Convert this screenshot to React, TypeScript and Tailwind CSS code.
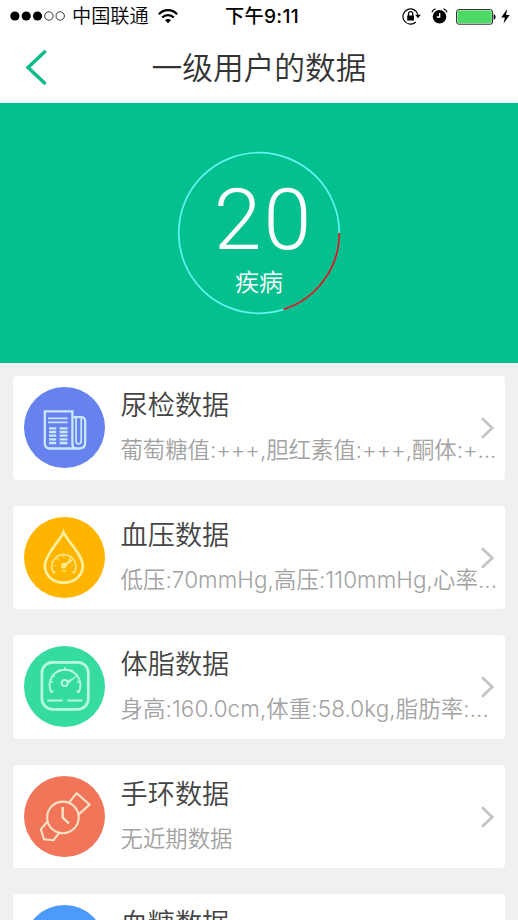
import React from 'react';

const RING_RADIUS = 80.3;
const RING_LENGTH = 2 * Math.PI * RING_RADIUS;

const SignalDots = () => (
  <svg width="56" height="10" viewBox="0 0 56 10" className="shrink-0">
    {[4.9, 16.2, 27.5].map((cx) => (
      <circle key={cx} cx={cx} cy="5" r="4.6" fill="#000" />
    ))}
    {[38.9, 50.2].map((cx) => (
      <circle key={cx} cx={cx} cy="5" r="4.2" fill="none" stroke="#000" strokeWidth="0.8" />
    ))}
  </svg>
);

const WifiIcon = () => (
  <svg width="20" height="15" viewBox="0 0 20 15" fill="none" stroke="#000" strokeWidth="2.3">
    <path d="M0.9 5.2C6 -0.2 14 -0.2 19.1 5.2" />
    <path d="M4.2 8.5C7.4 5.2 12.6 5.2 15.8 8.5" />
    <path d="M10 14.2L6.9 11.1C8.5 9.5 11.5 9.5 13.1 11.1Z" fill="#000" stroke="none" />
  </svg>
);

const LockIcon = () => (
  <svg width="19" height="17" viewBox="0 0 19 17" fill="none" stroke="#000">
    <path d="M15.9 6.6A7.6 7.6 0 1 0 13.8 14" strokeWidth="1.2" />
    <path d="M13.2 6.8H18.8L16 10.3Z" fill="#000" stroke="none" />
    <rect x="5.2" y="7.5" width="6.8" height="5" rx="0.5" fill="#000" stroke="none" />
    <path d="M6.5 8V5.8A2.1 2.1 0 0 1 10.7 5.8V8" strokeWidth="1.3" />
  </svg>
);

const AlarmIcon = () => (
  <svg width="17" height="17" viewBox="0 0 17 17" fill="none">
    <circle cx="8.5" cy="8.8" r="6.8" fill="#000" />
    <path d="M8.7 5V9H5.8" stroke="#fff" strokeWidth="1.3" />
    <path d="M0.9 4.2C1.4 2.6 2.8 1.3 4.5 0.8M16.1 4.2C15.6 2.6 14.2 1.3 12.5 0.8" stroke="#000" strokeWidth="1.2" />
  </svg>
);

const BatteryIcon = () => (
  <svg width="40" height="16" viewBox="0 0 40 16">
    <rect x="0.6" y="0.6" width="36" height="14.6" rx="2.2" fill="#fff" stroke="#222" strokeWidth="1" />
    <rect x="1.5" y="1.5" width="34.2" height="12.8" rx="1" fill="#4cd964" />
    <path d="M37.7 5.2C40.2 5.6 40.2 10.2 37.7 10.6Z" fill="#000" />
  </svg>
);

const BoltIcon = () => (
  <svg width="9" height="15" viewBox="0 0 9 15">
    <path d="M6.2 0L0.2 8.4H3.9L2.6 14.6L8.7 6H5Z" fill="#000" />
  </svg>
);

const UrineIcon = () => (
  <g fill="none" stroke="#c9e8fb" strokeWidth="2.3">
    <path d="M20.8 24.4H48.4V57C48.4 60 50.4 61.5 53 61.5H26C22.5 61.5 20.8 59.6 20.8 56.5Z" />
    <path d="M48.4 30.2H57C59.8 30.2 61.2 31.8 61.2 34.4V55.5C61.2 59.5 59 61.5 55 61.5H52" />
    <path d="M52 31V53.5C52 58 57.2 58 57.2 53.5V31" strokeWidth="1.7" />
    <path d="M24 31.3H43.5M24 35.3H43.5" strokeWidth="1.8" />
    <path d="M25 41.3H32.2M25 45H32.2M25 48.7H32.2M25 52.4H32.2M25 56H32.2M35.6 41.3H43.5M35.6 45H43.5M35.6 48.7H43.5M35.6 52.4H43.5M35.6 56H43.5" strokeWidth="2.3" />
  </g>
);

const PressureIcon = () => (
  <g fill="none" stroke="#fff0a0" strokeLinecap="round">
    <path d="M39.5 15.2C36.5 22.8 20.9 38.2 20.9 48.6C20.9 59 29.2 65.8 39.7 65.8C50.2 65.8 58.8 59 58.8 48.6C58.8 38.2 42.5 22.8 39.5 15.2Z" strokeWidth="2.7" />
    <path d="M29.4 55.6A12 12 0 1 1 50.2 55.6" stroke="#ffe682" strokeWidth="1.7" />
    <path d="M30.7 48.5H31.7M33.5 42L34.2 42.7M39.8 39V40M46.1 42L45.4 42.7M48.9 48.5H47.9" strokeWidth="1.2" />
    <path d="M40.4 48.4L46.8 43.6" strokeWidth="2" />
    <circle cx="39.7" cy="48.8" r="2.1" fill="#ffe270" strokeWidth="1.2" />
    <path d="M29.6 56.2L31.6 54.8M50 56.2L48 54.8M38 53.8H42" stroke="#ffe682" strokeWidth="1.2" />
  </g>
);

const ScaleIcon = () => (
  <g fill="none" stroke="#b8fbe0">
    <rect x="17.9" y="16.3" width="46.4" height="47" rx="10.5" strokeWidth="2.7" />
    <path d="M27.2 46A15.4 15.4 0 1 1 54.8 46" strokeWidth="1.9" strokeLinecap="round" />
    <path d="M26 36H29M28.3 28.8L30.6 30.7M33.8 23.6L35.2 26.2M41 21.3V24.3M48.2 23.6L46.8 26.2M53.7 28.8L51.4 30.7M56 36H53M27 46.2L29.6 45M55 46.2L52.4 45" strokeWidth="1.5" />
    <circle cx="40.7" cy="37" r="3" strokeWidth="1.9" />
    <path d="M43.2 35.3L51.4 31.1L44.4 37Z" fill="#b8fbe0" strokeWidth="0.9" />
    <path d="M23.4 54.4H38.7M43.4 54.4H58.4" strokeWidth="2" />
  </g>
);

const WatchIcon = () => (
  <g fill="none" stroke="#ffe3c4" strokeWidth="2.1" strokeLinejoin="round">
    <circle cx="38.9" cy="41.4" r="15.8" />
    <path d="M45.3 26.4L52.7 17.2L65.6 28.6L54.4 38.6" />
    <path d="M23 46L16.9 53.4L20 63.2L29.3 64.3L35.2 57" />
    <path d="M38.7 31V41.6L44.9 47.3" strokeWidth="2.4" />
  </g>
);

interface Record {
  title: string;
  detail: string;
  color: string;
  icon?: React.ReactNode;
  spacing?: string;
}

const records: Record[] = [
  { title: '尿检数据', detail: '葡萄糖值:+++,胆红素值:+++,酮体:+...', color: '#6582ee', icon: <UrineIcon />, spacing: 'tracking-[-0.04px]' },
  { title: '血压数据', detail: '低压:70mmHg,高压:110mmHg,心率...', color: '#ffb500', icon: <PressureIcon />, spacing: 'tracking-[0.09px]' },
  { title: '体脂数据', detail: '身高:160.0cm,体重:58.0kg,脂肪率:...', color: '#36dba0', icon: <ScaleIcon />, spacing: 'tracking-[0.11px]' },
  { title: '手环数据', detail: '无近期数据', color: '#f17558', icon: <WatchIcon /> },
  { title: '血糖数据', detail: '', color: '#4c9bfb' },
];

const StatusBar = () => (
  <div className="grid h-[33px] grid-cols-3 items-center text-[19.2px] leading-none text-black">
    <div className="flex items-center pl-[10px] whitespace-nowrap">
      <SignalDots />
      <span className="ml-[6px] pt-px">中国联通</span>
      <span className="ml-[9px]"><WifiIcon /></span>
    </div>
    <div className="pt-px pl-[6px] text-center font-medium tracking-[0.3px] whitespace-nowrap">下午9:11</div>
    <div className="flex items-center justify-end pr-[8px]">
      <span className="mr-[10px]"><LockIcon /></span>
      <AlarmIcon />
      <span className="ml-[8px]"><BatteryIcon /></span>
      <span className="ml-[5px]"><BoltIcon /></span>
    </div>
  </div>
);

const RecordCard = ({ title, detail, color, icon, spacing = '' }: Record) => (
  <div className="flex h-[103.6px] shrink-0 rounded-[4px] bg-white pl-[11px]">
    <svg width="81" height="81" viewBox="0 0 81 81" className="mt-[11px] shrink-0">
      <circle cx="40.5" cy="40.5" r="40.5" fill={color} />
      {icon}
    </svg>
    <div className="ml-[15.5px] w-[360px] shrink-0 whitespace-nowrap">
      <div className="mt-[12px] h-[36px] text-[27.2px] leading-[36px] text-[#444]">{title}</div>
      <div className={`mt-[10px] h-[32px] text-[22.4px] leading-[32px] text-[#a2a2a2] ${spacing}`}>{detail}</div>
    </div>
    <svg width="13" height="22" viewBox="0 0 13 22" className="mt-[41px] shrink-0">
      <path d="M1 1.2L11.2 11L1 20.8" fill="none" stroke="#c4c4c9" strokeWidth="2.7" />
    </svg>
  </div>
);

export default function App() {
  return (
    <div className="flex h-[920px] w-[518px] flex-col overflow-hidden bg-[#f0f0f0] font-['Inter','Noto_Sans_CJK_SC',sans-serif] font-[350]">
      <div className="h-[103px] shrink-0 bg-white">
        <StatusBar />
        <div className="grid h-[70px] grid-cols-[100px_1fr_100px] items-center">
          <svg width="21" height="36" viewBox="0 0 21 36" className="ml-[26px]">
            <path d="M18.5 2L2 17.5L18.5 33" fill="none" stroke="#0fbc8d" strokeWidth="3.6" strokeLinecap="round" />
          </svg>
          <div className="text-center text-[30.7px] leading-none text-[#333]">一级用户的数据</div>
        </div>
      </div>

      <div className="grid h-[260px] shrink-0 place-items-center bg-[#03c08e]">
        <div className="grid place-items-center">
          <svg width="164" height="164" viewBox="0 0 164 164" fill="none" className="col-start-1 row-start-1">
            <circle cx="82" cy="82" r={RING_RADIUS} stroke="#5ff5ee" strokeWidth="1.7" />
            <circle
              cx="82"
              cy="82"
              r={RING_RADIUS}
              stroke="#cb1b20"
              strokeWidth="1.9"
              strokeDasharray={`${RING_LENGTH * 0.2} ${RING_LENGTH}`}
            />
          </svg>
          <div className="col-start-1 row-start-1 flex flex-col items-center pt-[9px] text-white">
            <div className="pl-[9px] font-['Roboto'] text-[86px] leading-[88px] font-light tracking-[2px]">20</div>
            <div className="mt-[3px] text-[24px] leading-[32px]">疾病</div>
          </div>
        </div>
      </div>

      <div className="flex flex-col gap-[26px] px-[13px] pt-[13px]">
        {records.map((record) => (
          <RecordCard key={record.title} {...record} />
        ))}
      </div>
    </div>
  );
}
